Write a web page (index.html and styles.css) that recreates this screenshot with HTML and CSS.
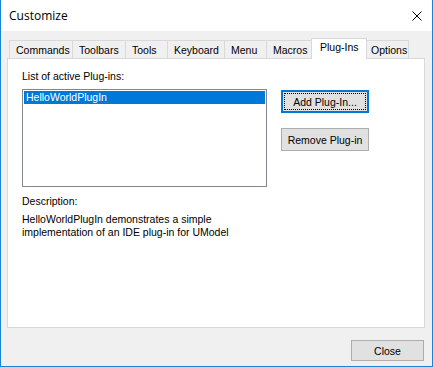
FILE: index.html
```html
<!DOCTYPE html>
<html lang="en">
<head>
  <meta charset="UTF-8" />
  <title>Customize</title>
  <link rel="stylesheet" href="styles.css">
</head>
<body>

  <div class="window">
    <header class="titlebar">
      <span class="title">Customize</span>
      <svg class="close-x" viewBox="0 0 10 10" width="10" height="10">
        <path d="M0.5 0.5 L9.5 9.5 M9.5 0.5 L0.5 9.5" stroke="#000" stroke-width="1" fill="none"/>
      </svg>
    </header>

    <main class="dialog">
      <nav class="tabs">
        <div class="tab w-commands">Commands</div>
        <div class="tab w-toolbars">Toolbars</div>
        <div class="tab w-tools">Tools</div>
        <div class="tab w-keyboard">Keyboard</div>
        <div class="tab w-menu">Menu</div>
        <div class="tab w-macros">Macros</div>
        <div class="tab tab-active w-plugins">Plug-Ins</div>
        <div class="tab w-options">Options</div>
      </nav>

      <section class="panel">
        <div class="field-label">List of active Plug-ins:</div>
        <div class="plugin-row">
          <div class="listbox">
            <div class="list-item selected">HelloWorldPlugIn</div>
          </div>
          <div class="side-buttons">
            <button class="btn btn-default">Add Plug-In...</button>
            <button class="btn">Remove Plug-in</button>
          </div>
        </div>
        <div class="field-label desc-label">Description:</div>
        <p class="desc-text">HelloWorldPlugIn demonstrates a simple<br>implementation of an IDE plug-in for UModel</p>
      </section>

      <footer class="footer">
        <button class="btn btn-close">Close</button>
      </footer>
    </main>
  </div>

</body>
</html>
```

FILE: styles.css
```css
/* ===== Palette ===== */
:root {
  --accent: #1883d7;
  --face: #f0f0f0;
  --tab-line: #d9d9d9;
  --btn-bg: #e1e1e1;
  --btn-line: #adadad;
  --select: #0078d7;
  --list-line: #828790;
}

* { box-sizing: border-box; margin: 0; padding: 0; }

body {
  font-family: "Liberation Sans", Arial, sans-serif;
  font-size: 10.5px;
  line-height: 13px;
  color: #000;
  background: #fff;
}

/* Window frame */
.window {
  width: 433px;
  height: 367px;
  display: flex;
  flex-direction: column;
  border: 1px solid var(--accent);
  border-top: none;
}

.titlebar {
  height: 31px;
  background: #fff;
  display: flex;
  align-items: center;
  justify-content: space-between;
  padding: 0 10px 0 8px;
}
.title {
  font-family: "Open Sans", "Noto Sans", sans-serif;
  font-size: 12px;
}
.close-x { display: block; margin-top: 1px; }

/* Dialog body */
.dialog {
  flex: 1;
  background: var(--face);
  display: flex;
  flex-direction: column;
  padding: 7px 7px 0 6px;
}

/* Tabs */
.tabs {
  display: flex;
  align-items: flex-end;
  height: 20px;
  padding-left: 2px;
}
.tab {
  height: 18px;
  border: 1px solid var(--tab-line);
  border-bottom: none;
  margin-right: -1px;
  padding: 3px 0 0 6px;
  background: var(--face);
  white-space: nowrap;
}
.tab-active {
  position: relative;
  z-index: 1;
  height: 21px;
  margin: 0 -3px -1px -2px;
  padding: 2px 0 0 8px;
  background: #fff;
}

.w-commands { width: 64px; }
.w-toolbars { width: 54px; }
.w-tools    { width: 43px; }
.w-keyboard { width: 58px; }
.w-menu     { width: 43px; }
.w-macros   { width: 48px; }
.w-plugins  { width: 56px; }
.w-options  { width: 45px; }

/* Tab page */
.panel {
  height: 270px;
  width: 418px;
  background: #fff;
  border: 1px solid var(--tab-line);
  padding: 11px 0 0 14px;
}

.plugin-row {
  display: flex;
  margin-top: 6px;
}
.listbox {
  width: 245px;
  height: 98px;
  border: 1px solid var(--list-line);
  padding: 1px;
}
.list-item {
  height: 13px;
  padding-left: 2px;
}
.list-item.selected {
  background: var(--select);
  color: #fff;
}

.side-buttons {
  display: flex;
  flex-direction: column;
  gap: 15px;
  margin: 1px 0 0 14px;
}

.btn {
  font-family: inherit;
  font-size: 10.5px;
  color: #000;
  width: 88px;
  height: 23px;
  background: var(--btn-bg);
  border: 1px solid var(--btn-line);
}
.btn-default {
  border: 2px solid var(--select);
  outline: 1px dotted #000;
  outline-offset: -4px;
}

.desc-label { margin-top: 8px; }
.desc-text { margin-top: 5px; }

/* Footer */
.footer {
  display: flex;
  justify-content: flex-end;
  padding: 12px 1px 0 0;
}
.btn-close {
  width: 73px;
  height: 21px;
}
```
